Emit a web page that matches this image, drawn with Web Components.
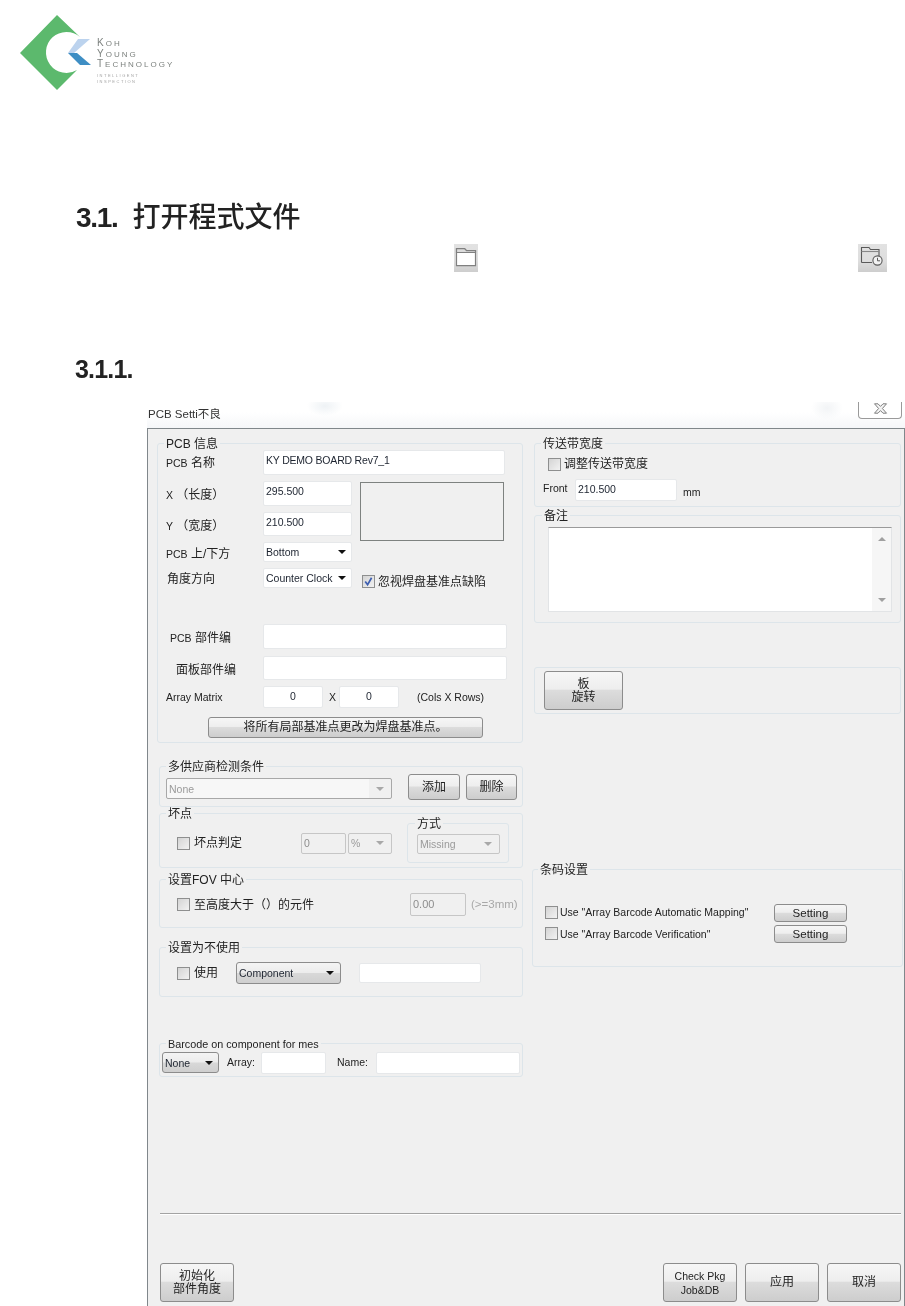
<!DOCTYPE html>
<html lang="zh">
<head>
<meta charset="utf-8">
<title>PCB Setting</title>
<style>
  html, body { margin: 0; padding: 0; background: #fff; }
  body { width: 905px; height: 1306px; overflow: hidden; font-family: "Liberation Sans", "Noto Sans CJK SC", sans-serif; }
</style>
</head>
<body>
<doc-page></doc-page>

<script>
const FONT = '"Liberation Sans", "Noto Sans CJK SC", sans-serif';

// a shadow root from a css + html string
function mount(el, css, html) {
  const root = el.attachShadow({ mode: 'open' });
  root.innerHTML = `<style>${css}</style>${html}`;
  return root;
}

class DocLogo extends HTMLElement {
  connectedCallback() {
    mount(this, `
      :host { display: flex; height: 76px; filter: blur(.6px); }
      svg { width: 76px; height: 76px; flex: none; }
      .words { margin: 23px 0 0 1px; color: #7d827f; font: 10px/9.6px "Liberation Sans", sans-serif; letter-spacing: 2px; white-space: nowrap; }
      .words b { font-size: 8px; font-weight: 400; }
      .fine { color: #a4a4a4; font-size: 4px; line-height: 6px; letter-spacing: 1.5px; margin-top: 3px; }
    `, `
      <svg viewBox="0 0 76 76">
        <path d="M37 0 L0 38 L37 75 L57 55 A20.5 20.5 0 1 1 60 22 Z" fill="#5cb96d"/>
        <path d="M70 24 L58 24 L48 38 L54 38 Z" fill="#bcd3ee"/>
        <path d="M48 38 L60 50 L71 50 L57 38 Z" fill="#3e8ec4"/>
      </svg>
      <div class="words">
        K<b>OH</b><br>Y<b>OUNG</b><br>T<b>ECHNOLOGY</b>
        <div class="fine">INTELLIGENT<br>INSPECTION</div>
      </div>
    `);
  }
}

class DocHeading extends HTMLElement {
  connectedCallback() {
    const lv2 = this.hasAttribute('sub');
    mount(this, `
      :host { display: flex; align-items: baseline; height: ${lv2 ? 25 : 28}px; color: #222; white-space: nowrap; filter: blur(.4px); }
      .n { font: 700 ${lv2 ? 25 : 28}px/1 "Liberation Sans", sans-serif; letter-spacing: ${lv2 ? -.8 : -1.3}px; }
      .t { font: 500 28px/1 "Noto Sans CJK SC", sans-serif; margin-left: 15px; }
    `, `<span class="n">${this.getAttribute('num')}</span><span class="t"><slot></slot></span>`);
  }
}

class ToolIcon extends HTMLElement {
  connectedCallback() {
    const clock = this.hasAttribute('clock');
    mount(this, `
      :host { display: block; width: ${clock ? 29 : 24}px; height: 28px; background: linear-gradient(#e2e2e2, #dedede 60%, #cdcdcd); filter: blur(.3px); }
      svg { display: block; }
    `, clock
      ? `<svg width="29" height="28" viewBox="0 0 29 28" fill="none" stroke="#5a5a5a" stroke-width="1.1">
           <path d="M3.5 18.5 V3.5 H11 L12.5 5.5 H21 V13 M3.5 18.5 H14"/>
           <path d="M3.5 7.5 H21" stroke="#888"/>
           <circle cx="19.5" cy="16.5" r="4.6" fill="#f2f2f2"/><path d="M19.5 13.8 V16.8 H22" stroke-width="1"/>
         </svg>`
      : `<svg width="24" height="28" viewBox="0 0 24 28" fill="none" stroke="#808080" stroke-width="1.2">
           <path d="M2.5 8.5 V4.7 H10.5 L12.5 6.7 H21.5 V21.7 H2.5 Z" fill="#fff"/>
           <path d="M2.5 4.7 H10.5 L12.5 6.7 H21.5 V8.5 H2.5 Z" fill="#dcdcdc"/>
         </svg>`);
  }
}

class WinGroup extends HTMLElement {
  connectedCallback() {
    mount(this, `
      :host { display: block; position: relative; box-sizing: border-box; border: 1px solid #dde5ea; border-radius: 3px; }
      .t { position: absolute; top: -7px; left: var(--title-x, 6px); padding: 0 2px; background: #f0f0f0; font-size: 12px; line-height: 14px; white-space: nowrap; }
    `, `<div class="t">${this.getAttribute('label')}</div><slot></slot>`);
  }
}

class WinInput extends HTMLElement {
  connectedCallback() {
    const off = this.hasAttribute('disabled');
    mount(this, `
      :host { display: block; box-sizing: border-box; overflow: hidden; border: 1px solid ${off ? '#c6c6c6' : '#e6e8ea'}; border-radius: 2px;
        background: ${off ? '#f0f0f0' : '#fff'}; color: ${off ? '#8d8d8d' : '#1d2430'};
        padding: 2px 0 0 2px; font-size: 10.5px; line-height: 14px; white-space: nowrap; }
      :host([center]) { text-align: center; padding-left: 0; }
    `, `<slot></slot>`);
  }
}

class WinSelect extends HTMLElement {
  connectedCallback() {
    mount(this, `
      :host { display: flex; align-items: center; justify-content: space-between; box-sizing: border-box; border: 1px solid #e6e8ea; border-radius: 2px;
        background: #fff; color: #1d2430; padding: 0 5px 0 2px; font-size: 10.5px; white-space: nowrap; }
      :host([button]) { border: 1px solid #8c8c8c; border-radius: 3px; background: linear-gradient(#f4f4f4, #ececec 48%, #d8d8d8 52%, #cfcfcf); }
      :host([disabled]) { border-color: #c6c6c6; background: #f0f0f0; color: #9a9a9a; padding-right: 7px; }
      i { width: 0; height: 0; border: 4px solid transparent; border-top: 4px solid #111; border-bottom: 0; margin-left: 4px; }
      :host([disabled]) i { border-top-color: #a8a8a8; }
    `, `<span><slot></slot></span><i></i>`);
  }
}

class WinCheck extends HTMLElement {
  connectedCallback() {
    const on = this.hasAttribute('checked');
    mount(this, `
      :host { display: flex; align-items: center; white-space: nowrap; font-size: var(--check-size, 12px); line-height: 14px; }
      .b { flex: none; box-sizing: border-box; width: 13px; height: 13px; margin-right: var(--check-gap, 4px); border: 1px solid #8e8f8f; background: linear-gradient(135deg, #d4d4d4, #f2f2f2); display: block; }
      svg { display: block; }
    `, `<span class="b">${on ? '<svg width="11" height="11" viewBox="0 0 11 11"><path d="M2.2 5.4 L4.6 8.6 L8.6 1.8" fill="none" stroke="#3f5fb0" stroke-width="1.7"/></svg>' : ''}</span><span><slot></slot></span>`);
  }
}

class WinButton extends HTMLElement {
  connectedCallback() {
    mount(this, `
      :host { display: flex; align-items: center; justify-content: center; text-align: center; box-sizing: border-box; border: 1px solid #8c8c8c; border-radius: 3px;
        background: linear-gradient(#f6f6f6, #eeeeee 46%, #dcdcdc 50%, #cdcdcd); font-size: 12px; line-height: 13px; white-space: nowrap; }
    `, `<span><slot></slot></span>`);
  }
}

class PcbDialog extends HTMLElement {
  connectedCallback() {
    mount(this, `
      :host { display: block; box-sizing: border-box; width: 758px; height: 904px; color: #222; font-family: ${FONT}; font-size: 12px; filter: blur(.35px); }
      .bar { display: flex; justify-content: flex-end; height: 26px; padding-right: 3px;
        background:
          radial-gradient(ellipse 18px 10px at 178px 4px, #eef2f5, transparent),
          radial-gradient(ellipse 16px 12px at 680px 6px, #f2f4f6, transparent),
          linear-gradient(#fff 40%, #f5f7f9); color: #333; line-height: 14px; font-size: 11.5px; }
      .cap { flex: 1; padding: 5px 0 0 1px; }
      .close { width: 44px; height: 17px; box-sizing: border-box; padding-bottom: 3px; background: #fff; border: 1px solid #9a9a9a; border-top: 0; border-radius: 0 0 4px 4px; display: flex; align-items: center; justify-content: center; }
      .body { box-sizing: border-box; height: 878px; border: 1px solid #80878b; border-bottom: 0; background: #f0f0f0; overflow: hidden; }
      .cols { display: grid; grid-template-columns: 385px 1fr; height: 784px; }
      .left { padding: 14px 0 0 9px; }
      .right { padding: 14px 3px 0 0; }
      .en { font-size: 10.5px; }

      .left win-group { margin: 23px 0 0 2px; width: 364px; }
      .left win-group.pcb { margin: 0; width: 366px; height: 300px; padding: 6px 0 0 8px; }
      .r { display: flex; align-items: center; }
      .top { display: grid; grid-template-columns: 97px 89px 1fr; grid-template-rows: 25px 25px 24px 20px 20px; row-gap: 6px; }
      .wide { grid-column: 2 / 4; width: 242px; letter-spacing: -.2px; }
      .picture { grid-column: 3; grid-row: 2 / 5; align-self: start; box-sizing: border-box; width: 144px; height: 59px; margin: 1px 0 0 8px; border: 1px solid #7e8280; }
      .top .c { grid-column: 3; margin: 7px 0 0 10px; --check-gap: 3px; }
      .l { align-self: center; }
      .lab { flex: none; box-sizing: border-box; width: 97px; }

      .bad { height: 55px; }
      .bad .c, .fov .c, .off .c { margin-left: 17px; }
      .fov { height: 49px; }
      .off { height: 50px; }
      .mfr { height: 41px; }
      .code { height: 34px; }
      .grey { color: #a8a8a8; font-size: 11.5px; }

      .right win-group { margin: 0 0 0 1px; width: 367px; }
      .memo-box { display: flex; justify-content: flex-end; box-sizing: border-box; width: 344px; height: 85px; margin: 11px 0 0 13px; background: #fff; border: 1px solid #e2e4e6; border-top: 1px solid #9a9a9a; }
      .scroll { width: 19px; display: flex; flex-direction: column; justify-content: space-between; align-items: center; padding: 9px 0 9px; background: #f6f6f6; box-sizing: border-box; }
      .scroll i { width: 0; height: 0; border: 4px solid transparent; }
      .scroll .u { border-bottom: 4px solid #a0a0a0; border-top: 0; }
      .scroll .d { border-top: 4px solid #a0a0a0; border-bottom: 0; }
      .right win-group.barcode { margin: 155px 0 0 -1px; width: 371px; height: 98px; padding-left: 12px; --title-x: 5px; }
      .barcode .r { height: 18px; --check-size: 10.5px; --check-gap: 2px; }
      .barcode win-check { width: 229px; }
      .setting { width: 73px; height: 18px; font-size: 11.5px; }

      .sep { height: 2px; margin: 0 3px 0 12px; background: linear-gradient(#a3a3a3 50%, #fff 50%); }
      .foot { display: flex; margin: 48px 3px 0 12px; height: 39px; gap: 8px; }
      .foot win-button { width: 74px; }
      .foot .grow { flex: 1; }
      .small { font-size: 10.5px; line-height: 14px; }
    `, `
      <div class="bar">
        <div class="cap">PCB Setti不良</div>
        <div class="close"><svg width="15" height="11" viewBox="0 0 15 11"><path d="M1.5 .8 H5 L7.5 3.4 L10 .8 H13.5 L9.4 5.5 L13.5 10.2 H10 L7.5 7.6 L5 10.2 H1.5 L5.6 5.5 Z" fill="#f4f4f4" stroke="#7e7e7e"/></svg></div>
      </div>
      <div class="body">
        <div class="cols">
          <div class="left">
            <win-group class="pcb" label='<span class="en">PCB</span> 信息'>
              <div class="top">
                <span class="l" style="margin-top:-2px"><span class="en">PCB</span> 名称</span>
                <win-input class="wide">KY DEMO BOARD Rev7_1</win-input>
                <span class="l"><span class="en">X</span> （长度）</span>
                <win-input>295.500</win-input>
                <div class="picture"></div>
                <span class="l"><span class="en">Y</span> （宽度）</span>
                <win-input style="grid-column:2">210.500</win-input>
                <span class="l"><span class="en">PCB</span> 上/下方</span>
                <win-select style="grid-column:2">Bottom</win-select>
                <span class="l" style="margin-left:1px;margin-top:-1px">角度方向</span>
                <win-select>Counter Clock</win-select>
                <win-check class="c" checked>忽视焊盘基准点缺陷</win-check>
              </div>
              <div class="r" style="height:25px;margin-top:36px">
                <span class="lab" style="padding-left:4px"><span class="en">PCB</span> 部件编</span>
                <win-input style="width:244px;height:25px"></win-input>
              </div>
              <div class="r" style="height:24px;margin-top:7px">
                <span class="lab" style="padding-left:10px">面板部件编</span>
                <win-input style="width:244px;height:24px"></win-input>
              </div>
              <div class="r en" style="height:22px;margin-top:6px">
                <span class="lab">Array Matrix</span>
                <win-input center style="width:60px;height:22px">0</win-input>
                <span style="margin:0 5px 0 6px;width:5px">X</span>
                <win-input center style="width:60px;height:22px">0</win-input>
                <span style="margin-left:18px">(Cols X Rows)</span>
              </div>
              <win-button style="width:275px;height:21px;margin:9px 0 0 42px">将所有局部基准点更改为焊盘基准点。</win-button>
            </win-group>

            <win-group class="mfr" label="多供应商检测条件">
              <div class="r" style="padding:7px 0 0 6px;align-items:flex-start">
                <win-select disabled style="width:226px;height:21px;margin-top:4px;border-color:#a8a8a8;background:linear-gradient(90deg,#f7f7f7 90%,#f0f0f0 90%)">None</win-select>
                <win-button style="width:52px;height:26px;margin-left:16px">添加</win-button>
                <win-button style="width:51px;height:26px;margin-left:6px">删除</win-button>
              </div>
            </win-group>

            <win-group class="bad" label="坏点" style="margin-top:6px">
              <div class="r" style="height:54px">
                <win-check class="c" style="width:124px;margin-top:4px">坏点判定</win-check>
                <win-input disabled style="width:45px;height:21px;margin-top:4px">0</win-input>
                <win-select disabled style="width:44px;height:21px;margin:4px 0 0 2px">%</win-select>
                <win-group label="方式" style="width:102px;height:40px;margin:4px 0 0 15px;--title-x:7px">
                  <win-select disabled style="width:83px;height:20px;margin:10px 0 0 9px">Missing</win-select>
                </win-group>
              </div>
            </win-group>

            <win-group class="fov" label='设置<span class="en">FOV</span> 中心' style="margin-top:11px">
              <div class="r" style="height:48px">
                <win-check class="c" style="width:233px;margin-top:1px">至高度大于（）的元件</win-check>
                <win-input disabled style="width:56px;height:23px;font-size:11px;padding-top:3px">0.00</win-input>
                <span class="grey" style="margin-left:5px">(&gt;=3mm)</span>
              </div>
            </win-group>

            <win-group class="off" label="设置为不使用" style="margin-top:19px">
              <div class="r" style="height:48px;padding-top:1px">
                <win-check class="c" style="width:59px">使用</win-check>
                <win-select button style="width:105px;height:22px;padding-right:6px">Component</win-select>
                <win-input style="width:122px;height:20px;margin-left:18px"></win-input>
              </div>
            </win-group>

            <win-group class="code" label='<span style="font-size:10.8px">Barcode on component for mes</span>' style="margin-top:46px">
              <div class="r en" style="padding:8px 0 0 2px;align-items:flex-start">
                <win-select button style="width:57px;height:21px">None</win-select>
                <span style="margin:2px 0 0 8px;width:34px;line-height:16px">Array:</span>
                <win-input style="width:65px;height:22px"></win-input>
                <span style="margin:2px 0 0 11px;width:39px;line-height:16px">Name:</span>
                <win-input style="width:144px;height:22px"></win-input>
              </div>
            </win-group>
          </div>

          <div class="right">
            <win-group label="传送带宽度" style="height:64px;--title-x:6px">
              <win-check style="margin:13px 0 0 13px;--check-gap:3px">调整传送带宽度</win-check>
              <div class="r en" style="margin:8px 0 0 8px;height:22px">
                <span style="width:32px;margin-top:-4px">Front</span>
                <win-input style="width:102px;height:22px">210.500</win-input>
                <span style="margin:3px 0 0 6px">mm</span>
              </div>
            </win-group>
            <win-group label="备注" style="height:108px;margin-top:8px;--title-x:7px">
              <div class="memo-box"><div class="scroll"><i class="u"></i><i class="d"></i></div></div>
            </win-group>
            <win-group label="" style="height:47px;margin-top:44px">
              <win-button style="width:79px;height:39px;margin:3px 0 0 9px">板<br>旋转</win-button>
            </win-group>
            <win-group class="barcode" label="条码设置">
              <div class="r" style="margin-top:34px">
                <win-check style="margin-top:-2px">Use "Array Barcode Automatic Mapping"</win-check>
                <win-button class="setting">Setting</win-button>
              </div>
              <div class="r" style="margin-top:3px">
                <win-check style="margin-top:-1px">Use "Array Barcode Verification"</win-check>
                <win-button class="setting">Setting</win-button>
              </div>
            </win-group>
          </div>
        </div>
        <div class="sep"></div>
        <div class="foot">
          <win-button>初始化<br>部件角度</win-button>
          <div class="grow"></div>
          <win-button class="small">Check Pkg<br>Job&amp;DB</win-button>
          <win-button>应用</win-button>
          <win-button>取消</win-button>
        </div>
      </div>
    `);
  }
}

class DocPage extends HTMLElement {
  connectedCallback() {
    mount(this, `
      :host { display: block; width: 905px; height: 1306px; overflow: hidden; }
      doc-logo { margin: 15px 0 0 20px; }
      doc-heading.h1 { margin: 110px 0 0 76px; }
      .icons { display: flex; margin: 15px 0 0 454px; }
      doc-heading.h2 { margin: 85px 0 0 75px; }
      pcb-dialog { margin: 20px 0 0 147px; }
    `, `
      <doc-logo></doc-logo>
      <doc-heading class="h1" num="3.1.">打开程式文件</doc-heading>
      <div class="icons"><tool-icon></tool-icon><tool-icon clock style="margin-left:380px"></tool-icon></div>
      <doc-heading class="h2" num="3.1.1." sub></doc-heading>
      <pcb-dialog></pcb-dialog>
    `);
  }
}

customElements.define('doc-logo', DocLogo);
customElements.define('doc-heading', DocHeading);
customElements.define('tool-icon', ToolIcon);
customElements.define('win-group', WinGroup);
customElements.define('win-input', WinInput);
customElements.define('win-select', WinSelect);
customElements.define('win-check', WinCheck);
customElements.define('win-button', WinButton);
customElements.define('pcb-dialog', PcbDialog);
customElements.define('doc-page', DocPage);
</script>
</body>
</html>
